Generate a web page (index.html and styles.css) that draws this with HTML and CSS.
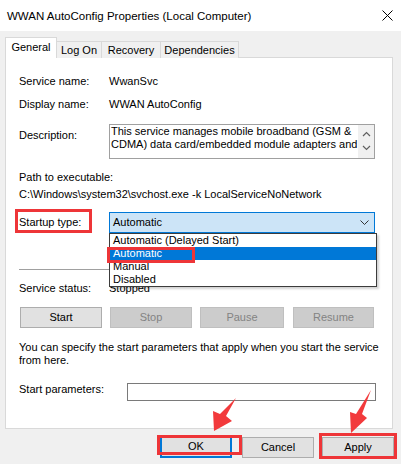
FILE: index.html
```html
<!DOCTYPE html>
<html lang="en">
<head>
<meta charset="utf-8">
<title>WWAN AutoConfig Properties</title>
<link rel="stylesheet" href="styles.css">
</head>
<body>
<div class="titlebar">
  <span class="title">WWAN AutoConfig Properties (Local Computer)</span>
  <svg class="close" width="11" height="11" viewBox="0 0 11 11"><path d="M0.5 0.5 L10.5 10.5 M10.5 0.5 L0.5 10.5" stroke="#000" stroke-width="1" fill="none"/></svg>
</div>
<div class="main">
  <div class="tabs">
    <div class="tab active">General</div>
    <div class="tab t-logon">Log On</div>
    <div class="tab t-recovery">Recovery</div>
    <div class="tab t-deps">Dependencies</div>
  </div>
  <div class="panel">
    <div class="row r1"><span class="lbl">Service name:</span><span>WwanSvc</span></div>
    <div class="row r2"><span class="lbl">Display name:</span><span>WWAN AutoConfig</span></div>
    <div class="row desc-row">
      <span class="lbl desc-lbl">Description:</span>
      <div class="desc-box">
        <div class="desc-text">
          <div>This service manages mobile broadband (GSM &amp;</div>
          <div>CDMA) data card/embedded module adapters and</div>
        </div>
        <div class="scrollbar">
          <svg width="9" height="6" viewBox="0 0 9 6"><path d="M1 5 L4.5 1.5 L8 5" stroke="#606060" stroke-width="1.2" fill="none"/></svg>
          <svg width="9" height="6" viewBox="0 0 9 6"><path d="M1 1 L4.5 4.5 L8 1" stroke="#606060" stroke-width="1.2" fill="none"/></svg>
        </div>
      </div>
    </div>
    <div class="path">
      <div>Path to executable:</div>
      <div>C:\Windows\system32\svchost.exe -k LocalServiceNoNetwork</div>
    </div>
    <div class="row startup">
      <span class="startup-lbl">Startup type:</span>
      <div class="combo-wrap">
        <div class="combo">
          <span>Automatic</span>
          <svg class="chev" width="9" height="5" viewBox="0 0 9 5"><path d="M0.5 0.5 L4.5 4.5 L8.5 0.5" stroke="#333" stroke-width="1" fill="none"/></svg>
        </div>
        <div class="dropdown">
          <div class="opt">Automatic (Delayed Start)</div>
          <div class="opt sel">Automatic</div>
          <div class="opt">Manual</div>
          <div class="opt">Disabled</div>
          <div class="mark-auto"></div>
        </div>
      </div>
    </div>
    <div class="sep"></div>
    <div class="row status"><span class="lbl">Service status:</span><span>Stopped</span></div>
    <div class="svc-buttons">
      <div class="btn">Start</div>
      <div class="btn disabled">Stop</div>
      <div class="btn disabled">Pause</div>
      <div class="btn disabled">Resume</div>
    </div>
    <p class="note">You can specify the start parameters that apply when you start the service from here.</p>
    <div class="row params">
      <span class="lbl params-lbl">Start parameters:</span>
      <div class="input"></div>
    </div>
  </div>
  <div class="footer">
    <div class="btn fbtn ok">OK</div>
    <div class="btn fbtn cancel">Cancel</div>
    <div class="btn fbtn apply">Apply</div>
  </div>
</div>
<div class="mark mark-ok"></div>
<div class="mark mark-apply"></div>
<svg class="arrows" width="401" height="464" viewBox="0 0 401 464">
  <polygon points="236,398 226,416 232,421 214,431 213,411 220,414" fill="#f23a3c"/>
  <polygon points="371,390 362,414 367,418 351,433 350,412 356,414" fill="#f23a3c"/>
</svg>
</body>
</html>
```

FILE: styles.css
```css
* { box-sizing: border-box; }
html, body { margin: 0; padding: 0; }
body {
  width: 401px;
  height: 464px;
  overflow: hidden;
  position: relative;
  background: #f0f0f0;
  color: #000;
  font-family: "Liberation Sans", Arial, sans-serif;
  font-size: 11px;
}
.titlebar {
  height: 31px;
  background: #fff;
  display: flex;
  align-items: center;
  padding-left: 7px;
}
.title { line-height: 16px; font-size: 11.5px; }
.close { margin-left: auto; margin-right: 8px; }

.main { padding: 6px 8px 0 5px; }

.tabs { display: flex; align-items: flex-end; height: 21px; position: relative; z-index: 2; margin-bottom: -1px; }
.tab {
  border: 1px solid #d9d9d9;
  border-bottom: none;
  background: #f0f0f0;
  text-align: center;
  height: 17px;
  line-height: 16px;
  margin-left: -1px;
}
.tab.active {
  background: #fff;
  height: 21px;
  line-height: 19px;
  width: 52px;
  margin-left: 0;
  position: relative;
  z-index: 1;
}
.t-logon { width: 46px; }
.t-recovery { width: 60px; }
.t-deps { width: 79px; }

.panel {
  background: #fff;
  border: 1px solid #d9d9d9;
  height: 372px;
  padding: 16px 17px 0 13px;
}
.row { display: flex; line-height: 15px; }
.lbl { width: 90px; flex: none; }
.r2 { margin-top: 8px; }
.desc-row { margin-top: 12px; align-items: flex-start; }
.desc-lbl { padding-top: 4px; }
.desc-box {
  flex: 1;
  height: 35px;
  border: 1px solid #a0a0a0;
  display: flex;
}
.desc-text { flex: 1; line-height: 13px; padding-left: 1px; white-space: nowrap; overflow: hidden; }
.scrollbar {
  width: 16px;
  background: #f0f0f0;
  display: flex;
  flex-direction: column;
  align-items: center;
  justify-content: space-between;
  padding: 6px 0 7px;
}
.scrollbar svg { display: block; }

.path { margin-top: 10px; line-height: 17px; }

.startup { margin-top: 9px; align-items: flex-start; }
.startup-lbl {
  margin-top: -3px;
  margin-left: -4px;
  margin-right: 17px;
  width: 77px;
  height: 24px;
  border: 3px solid #ee3538;
  padding: 1px 0 0 1px;
  line-height: 18px;
  flex: none;
}
.combo-wrap { flex: 1; position: relative; }
.combo {
  height: 21px;
  border: 1px solid #0078d7;
  background: #cce4f7;
  display: flex;
  align-items: center;
  padding-left: 3px;
  line-height: 19px;
}
.chev { margin-left: auto; margin-right: 5px; }
.dropdown {
  position: absolute;
  left: 0;
  top: 100%;
  width: 268px;
  background: #fff;
  border: 1px solid #3c3c3c;
  box-shadow: 2px 2px 2px rgba(0, 0, 0, 0.18);
  z-index: 5;
}
.opt { height: 13px; line-height: 13px; padding-left: 3px; }
.opt.sel { background: #0078d7; color: #fff; }
.mark-auto {
  position: absolute;
  left: -3px;
  top: 13px;
  width: 88px;
  height: 16px;
  border: 3px solid #ee3538;
}

.sep { margin-top: 36px; height: 1px; background: #a0a0a0; }
.status { margin-top: 11px; }

.svc-buttons {
  margin-top: 11px;
  margin-left: 1px;
  display: grid;
  grid-template-columns: 82px 82px 84px 82px;
  column-gap: 8px;
}
.btn {
  height: 21px;
  border: 1px solid #adadad;
  background: #e1e1e1;
  text-align: center;
  line-height: 19px;
}
.btn.disabled { background: #cccccc; border-color: #bfbfbf; color: #838383; }
.svc-buttons .btn:nth-child(4) { margin-left: 1px; }

.note { margin: 13px -12px 0 0; line-height: 13px; }

.params { margin-top: 16px; align-items: flex-start; }
.params-lbl { width: 108px; line-height: 13px; }
.input { flex: 1; height: 18px; border: 1px solid #7a7a7a; margin-right: -1px; }

.footer {
  margin-top: 8px;
  margin-right: -1px;
  display: flex;
  justify-content: flex-end;
}
.fbtn { width: 72px; }
.ok { border: 2px solid #0078d7; line-height: 17px; margin-right: 10px; margin-top: -1px; height: 22px; }
.cancel { margin-right: 8px; }

.mark { position: absolute; border: 3px solid #ee3538; }
.mark-ok { left: 157px; top: 435px; width: 85px; height: 20px; }
.mark-apply { left: 319px; top: 433px; width: 78px; height: 26px; }

.arrows { position: absolute; left: 0; top: 0; pointer-events: none; }
```
